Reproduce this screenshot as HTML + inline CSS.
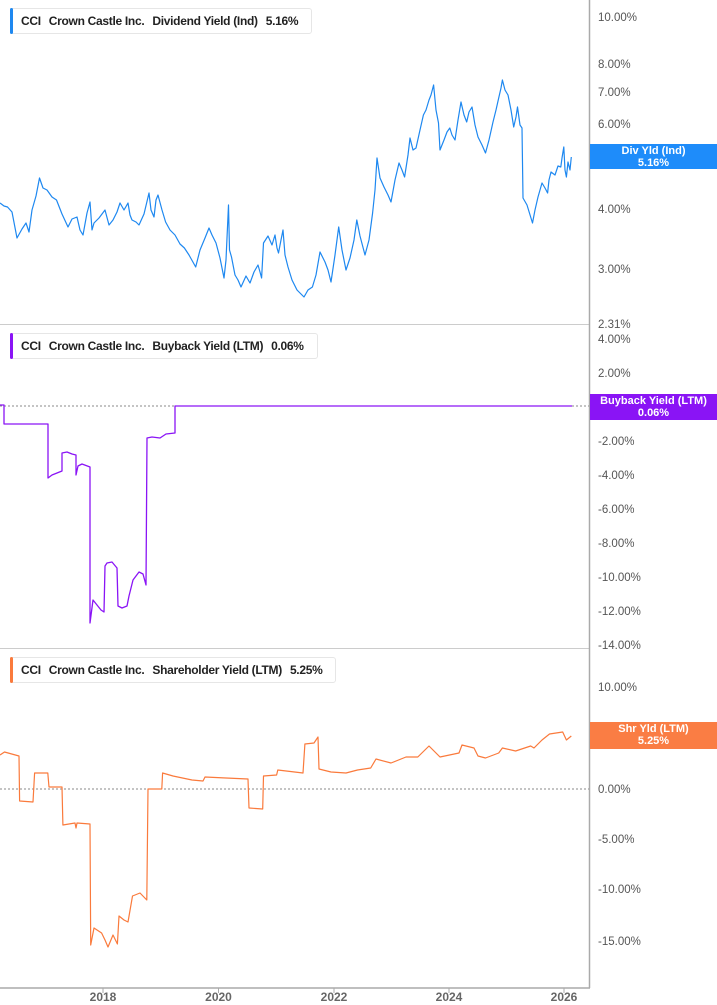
<!DOCTYPE html>
<html><head><meta charset="utf-8"><style>
body{margin:0;width:717px;height:1005px;background:#fff;overflow:hidden;font-family:"Liberation Sans",sans-serif}
.leg{position:absolute;left:10px;height:24px;border:1px solid #e6e6e6;border-radius:3px;background:#fff;font-size:12px;letter-spacing:-0.3px;font-weight:bold;color:#222;line-height:24px;padding-left:10px;padding-right:5px;white-space:nowrap}
.leg:before{content:"";position:absolute;left:-1px;top:-1px;bottom:-1px;width:3px;border-radius:2px;background:var(--c)}
.leg span{margin-right:8px}
.leg .n{font-weight:600}
.tag{position:absolute;left:590px;width:127px;color:#fff;font-size:11px;font-weight:bold;text-align:center;line-height:12px;padding-top:1px}
</style></head><body>
<svg width="717" height="1005" style="position:absolute;left:0;top:0" font-family="Liberation Sans, sans-serif">
<g stroke="#ccc" stroke-width="1"><line x1="0" y1="324.5" x2="589" y2="324.5"/><line x1="0" y1="648.5" x2="589" y2="648.5"/></g>
<line x1="589.5" y1="0" x2="589.5" y2="988" stroke="#aaa" stroke-width="1.5"/>
<line x1="0" y1="988" x2="590" y2="988" stroke="#aaa" stroke-width="1.5"/>
<g stroke="#888" stroke-dasharray="2,2" stroke-width="1"><line x1="0" y1="406" x2="589" y2="406"/><line x1="0" y1="789" x2="589" y2="789"/></g>
<g stroke="#aaa"><line x1="103" y1="988" x2="103" y2="993"/><line x1="218.5" y1="988" x2="218.5" y2="993"/><line x1="334" y1="988" x2="334" y2="993"/><line x1="449" y1="988" x2="449" y2="993"/><line x1="564" y1="988" x2="564" y2="993"/></g>
<g font-size="12" font-weight="bold" fill="#666" text-anchor="middle"><text x="103" y="1001">2018</text><text x="218.5" y="1001">2020</text><text x="334" y="1001">2022</text><text x="449" y="1001">2024</text><text x="564" y="1001">2026</text></g>
<g font-size="11.5" fill="#555">
<text x="598" y="21">10.00%</text><text x="598" y="68">8.00%</text><text x="598" y="96">7.00%</text><text x="598" y="128">6.00%</text><text x="598" y="164">5.00%</text><text x="598" y="213">4.00%</text><text x="598" y="273">3.00%</text><text x="598" y="328">2.31%</text>
<text x="598" y="343">4.00%</text><text x="598" y="377">2.00%</text><text x="598" y="445">-2.00%</text><text x="598" y="479">-4.00%</text><text x="598" y="513">-6.00%</text><text x="598" y="547">-8.00%</text><text x="598" y="581">-10.00%</text><text x="598" y="615">-12.00%</text><text x="598" y="649">-14.00%</text>
<text x="598" y="691">10.00%</text><text x="598" y="742">5.00%</text><text x="598" y="793">0.00%</text><text x="598" y="843">-5.00%</text><text x="598" y="893">-10.00%</text><text x="598" y="945">-15.00%</text>
</g>
<polyline fill="none" stroke="#1e88f0" stroke-width="1.2" stroke-linejoin="round" points="0,203 4,206 7.5,207 12,212 17,238 22,229 26,223 29,232 32,210 36,196 39.5,178 43,188 47,190 52,197 56.5,200 62,214 68,227 72,219 77,217 80,230 83,235 87,213 90,202 92,230 94,223 99,218 105,210 109,225 113,220 117,212 120,203 124,210 128,203 130,215 132,220 136,222 139,225 144,214 149,193 151,210 154,217 156,200 158,195 162,210 165.6,222 170,230 175,235 180,244 184.4,248 189,255 195.7,267 200,250 205,238 209,228 212,235 216,243 220,258 224,278 226,260 228.5,205 229.5,250 231.5,257 235,275 238,280 241,287 246,276 250,283 254,272 258,265 260,272 261.6,278 263.5,243 268,236 272,245 275,235 277,248 278.5,253 281,240 283,230 285,255 288,267 292,280 297,290 300,293 304,297 308,290 312.4,287 316,275 320,252 325,262 328,270 331,282 335,255 338.7,227 342,250 346,270 350,258 354,240 356.8,220 360,236 365,255 369,240 372.6,213 375,190 377,158 380,178 384,187 388,195 391,202 395,180 399,163 402,170 404.6,177 408,155 410,138 413,150 416,148 420,130 423.4,115 426,110 429,100 431,95 433.6,85 436,110 438.5,123 440,150 444,140 447,132 449.8,128 452,135 455,140 458,120 461,102 464,115 466.7,122 469,112 472,107 475,125 478,137 482,145 485.5,153 489,140 493,122 496,110 498.7,98 501,88 502.4,80 505,90 508,95 511,110 513.7,127 516,117 517.5,107 520,125 522,128 523,198 527,205 532.5,223 535,210 538,197 540,190 542,183 545,188 547.6,193 549,180 551,172 555,175 558,166 560.8,167 562,158 563.8,147 565,170 566.4,177 568,162 570,170 571.3,157"/>
<polyline fill="none" stroke="#8a14f5" stroke-width="1.3" stroke-linejoin="round" points="0,405 4,405 4,424 48,424 48,478 52,475 62,471 62,453 67,452 72,454 76,455 76,475 78,466 82,464 90,467 90,623 93,600 97,605 101,610 104,612 105,566 107,563 112,562 117,568 118,606 122,608 127,606 129,596 133,580 139,572 143,574 146,585 147,438 152,437 160,438 166,434 175,433 175,406 572,406"/>
<polyline fill="none" stroke="#fa7a3c" stroke-width="1.2" stroke-linejoin="round" points="0,755 4.5,752 19,756 19.6,801 33,802 34.6,773 47.8,773 49,787 62,787 62.9,825 75,823 76,828 77,823 90,824 90.7,945 94,928 101.6,933 105,940 108,947 113,935 117.4,944 119,916 124,920 128,922 132.5,896 140,893 146.8,900 148,789 161.8,789 162.6,773 173,776 192,780 203,781 205,777 226,778 248,779 249,808 262.7,809 263.5,776 276.6,775 277.8,770 303,773 304.9,744 314,743 318,737 319,769 331,772 346,773 357.5,770 370.7,768 376,759 391,763 406,757 417.8,757 429,746 440,757 459,753 462,745 474,748 478,756 485.5,758 498.7,753 502.4,748 515.6,751 530.7,746 534,748 542,740 549.5,734 562.7,732 566.4,740 571.3,736"/>
</svg>
<div class="leg" style="top:8px;--c:#1e88f0"><span>CCI</span><span>Crown Castle Inc.</span><span class="n">Dividend Yield (Ind)</span><span>5.16%</span></div>
<div class="leg" style="top:333px;--c:#8a14f5"><span>CCI</span><span>Crown Castle Inc.</span><span class="n">Buyback Yield (LTM)</span><span>0.06%</span></div>
<div class="leg" style="top:657px;--c:#fa7a3c"><span>CCI</span><span>Crown Castle Inc.</span><span class="n">Shareholder Yield (LTM)</span><span>5.25%</span></div>
<div class="tag" style="top:144px;height:24px;background:#1e8cfa">Div Yld (Ind)<br>5.16%</div>
<div class="tag" style="top:394px;height:25px;background:#8a14f5">Buyback Yield (LTM)<br>0.06%</div>
<div class="tag" style="top:722px;height:26px;background:#fa7d44">Shr Yld (LTM)<br>5.25%</div>
</body></html>
